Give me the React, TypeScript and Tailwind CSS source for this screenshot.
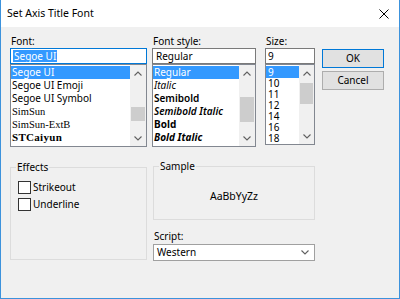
import React from "react";

const fonts = [
  { name: "Segoe UI", cls: "" },
  { name: "Segoe UI Emoji", cls: "" },
  { name: "Segoe UI Symbol", cls: "" },
  { name: "SimSun", cls: "font-['Liberation_Serif',serif] text-[10.5px]" },
  { name: "SimSun-ExtB", cls: "font-['Liberation_Serif',serif] text-[10.5px]" },
  { name: "STCaiyun", cls: "font-['Liberation_Serif',serif] font-bold text-[11px] tracking-[0.3px]" },
];

const styles = [
  { name: "Regular", cls: "" },
  { name: "Italic", cls: "italic" },
  { name: "Semibold", cls: "font-semibold" },
  { name: "Semibold Italic", cls: "font-semibold italic" },
  { name: "Bold", cls: "font-bold" },
  { name: "Bold Italic", cls: "font-bold italic" },
];

const sizes = ["9", "10", "11", "12", "14", "16", "18"];

const Chevron = ({ up }: { up?: boolean }) => (
  <svg width="8" height="5" viewBox="0 0 8 5" className="block">
    <polyline
      points={up ? "0.5,4.5 4,1 7.5,4.5" : "0.5,0.5 4,4 7.5,0.5"}
      fill="none"
      stroke="#606060"
      strokeWidth="1.1"
    />
  </svg>
);

const ScrollBar = ({ thumbTop, thumbH, w }: { thumbTop: string; thumbH: string; w: string }) => (
  <div className={`${w} h-full bg-[#f0f0f0] flex flex-col`}>
    <div className="h-[16px] flex items-center justify-center">
      <Chevron up />
    </div>
    <div className="flex-1">
      <div className={`${thumbTop} ${thumbH} mx-[1px] bg-[#cdcdcd]`} />
    </div>
    <div className="h-[16px] flex items-center justify-center">
      <Chevron />
    </div>
  </div>
);

const Label = ({ children }: { children: React.ReactNode }) => (
  <div className="h-[14px] leading-[14px] pl-[1px]">{children}</div>
);

const Check = ({ label }: { label: string }) => (
  <div className="flex items-center h-[13px]">
    <div className="w-[13px] h-[13px] border border-[#333333] bg-white" />
    <span className="ml-[2px] leading-[13px]">{label}</span>
  </div>
);

export default function App() {
  return (
    <div className="w-[400px] h-[299px] flex flex-col border-x border-b border-[#3c92dc] bg-white font-['Noto_Sans',sans-serif] text-[10px] text-black overflow-hidden">
      {/* title bar */}
      <div className="h-[27px] flex items-center justify-between pl-[6px] pr-[10px] bg-white">
        <span className="text-[10.5px]">Set Axis Title Font</span>
        <svg width="10" height="10" viewBox="0 0 10 10">
          <path d="M0.5 0.5 L9.5 9.5 M9.5 0.5 L0.5 9.5" stroke="#000" strokeWidth="1" />
        </svg>
      </div>

      <div className="flex-1 bg-[#f0f0f0] pl-[9px] pt-[7px]">
        {/* top row */}
        <div className="flex items-start">
          <div className="w-[137px]">
            <Label>Font:</Label>
            <div className="h-[16px] border border-[#0078d7] bg-white flex items-center pl-[2px]">
              <span className="bg-[#3399ff] text-white leading-[12px] px-[1px]">Segoe UI</span>
            </div>
            <div className="h-[83px] border border-[#828790] bg-white flex">
              <div className="flex-1 pt-[1px]">
                {fonts.map((f, i) => (
                  <div
                    key={f.name}
                    className={`h-[13px] leading-[13px] pl-[1px] whitespace-nowrap overflow-hidden ${f.cls} ${
                      i === 0 ? "bg-[#3399ff] text-white" : ""
                    }`}
                  >
                    {f.name}
                  </div>
                ))}
              </div>
              <ScrollBar w="w-[16px]" thumbTop="mt-[26px]" thumbH="h-[14px]" />
            </div>
          </div>

          <div className="w-[104px] ml-[5px]">
            <Label>Font style:</Label>
            <div className="h-[16px] border border-[#7a7a7a] bg-white flex items-center pl-[3px]">Regular</div>
            <div className="h-[83px] border border-[#828790] bg-white flex">
              <div className="flex-1 pt-[1px]">
                {styles.map((s, i) => (
                  <div
                    key={s.name}
                    className={`h-[13px] leading-[13px] pl-[1px] whitespace-nowrap ${s.cls} ${
                      i === 0 ? "bg-[#3399ff] text-white" : ""
                    }`}
                  >
                    {s.name}
                  </div>
                ))}
              </div>
              <ScrollBar w="w-[16px]" thumbTop="mt-[16px]" thumbH="h-[25px]" />
            </div>
          </div>

          <div className="w-[50px] ml-[9px]">
            <Label>Size:</Label>
            <div className="h-[16px] border border-[#7a7a7a] bg-white flex items-center pl-[2px]">9</div>
            <div className="h-[81px] border border-[#828790] bg-white flex">
              <div className="flex-1 pt-[1px]">
                {sizes.map((s, i) => (
                  <div
                    key={s}
                    className={`${i === 0 ? "h-[12px] bg-[#3399ff] text-white" : "h-[11px]"} leading-[11px] pl-[2px] flex items-center`}
                  >
                    {s}
                  </div>
                ))}
              </div>
              <ScrollBar w="w-[15px]" thumbTop="mt-[2px]" thumbH="h-[21px]" />
            </div>
          </div>

          <div className="w-[62px] ml-[7px] mt-[15px] flex flex-col gap-[3px]">
            <div className="h-[19px] border border-[#0078d7] bg-[#e1e1e1] flex items-center justify-center">OK</div>
            <div className="h-[19px] border border-[#adadad] bg-[#e1e1e1] flex items-center justify-center">Cancel</div>
          </div>
        </div>

        {/* bottom row */}
        <div className="flex items-start">
          <div className="relative w-[137px] h-[93px] mt-[20px] border border-[#dcdcdc] pl-[7px] pt-[13px] flex flex-col gap-[4px]">
            <span className="absolute left-[5px] top-[-8px] px-[1px] bg-[#f0f0f0] leading-[14px]">Effects</span>
            <Check label="Strikeout" />
            <Check label="Underline" />
          </div>

          <div className="ml-[6px] mt-[19px] w-[162px]">
            <div className="relative h-[54px] border border-[#dcdcdc] flex items-center justify-center pt-[8px]">
              <span className="absolute left-[5px] top-[-8px] px-[1px] bg-[#f0f0f0] leading-[14px]">Sample</span>
              <span className="text-[10.5px]">AaBbYyZz</span>
            </div>
            <div className="mt-[9px]">
              <Label>Script:</Label>
            </div>
            <div className="mt-[1px] h-[17px] border border-[#a0a0a0] bg-white flex items-center justify-between pl-[3px] pr-[5px]">
              <span>Western</span>
              <Chevron />
            </div>
          </div>
        </div>
      </div>
    </div>
  );
}
